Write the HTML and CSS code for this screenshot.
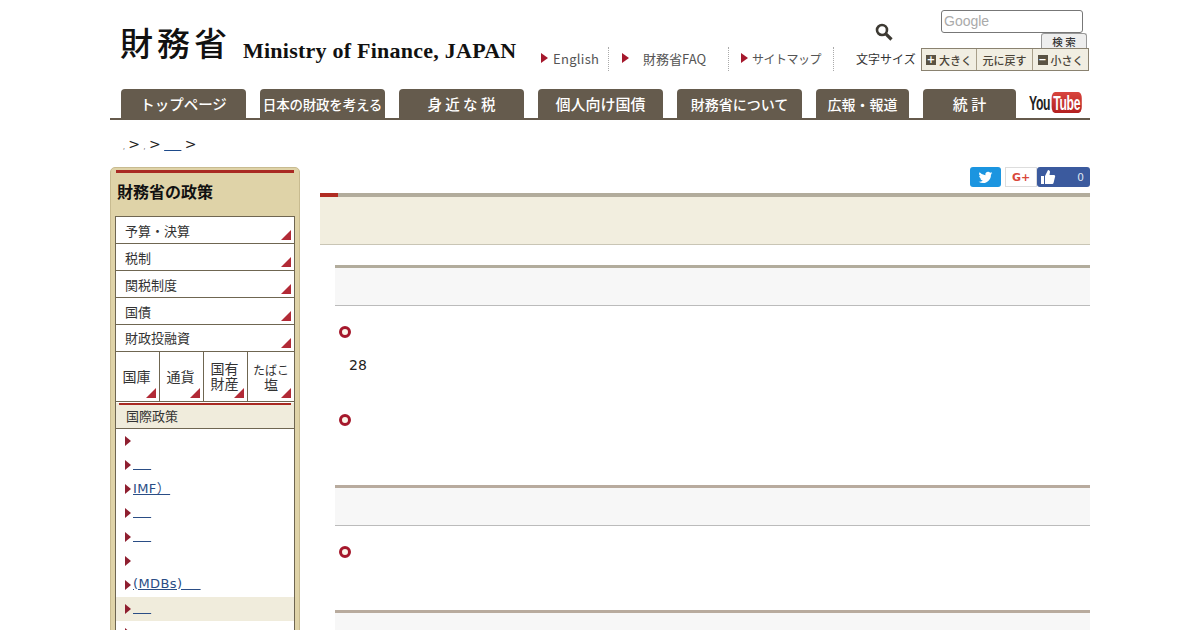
FILE: index.html
```html
<!DOCTYPE html>
<html lang="ja">
<head>
<meta charset="utf-8">
<title>財務省</title>
<link rel="stylesheet" href="styles.css">
</head>
<body>
<div class="page">
  <header class="header">
    <div class="logo"><span class="logo-ja">財務省</span><span class="logo-en">Ministry of Finance, JAPAN</span></div>
    <div class="tools">
      <div class="links">
        <a class="tl tl-en"><i class="tri"></i>English</a>
        <a class="tl tl-faq"><i class="tri"></i><span class="faq">財務省FAQ</span></a>
        <a class="tl tl-map"><i class="tri"></i><span class="map">サイトマップ</span></a>
      </div>
      <span class="fs-label">文字サイズ</span>
      <div class="search">
        <svg class="lens" viewBox="0 0 18 18" width="18" height="18"><circle cx="7" cy="7" r="5" fill="none" stroke="#3d3a33" stroke-width="2.6"/><path d="M10.8 10.8 L16.500 16.500" stroke="#3d3a33" stroke-width="3.2"/></svg>
        <div class="gbox">Google</div>
        <div class="gbtn">検 索</div>
      </div>
      <div class="fs">
        <span class="fs-b fs-1"><i class="sq">+</i>大きく</span>
        <span class="fs-b fs-2">元に戻す</span>
        <span class="fs-b fs-3"><i class="sq">−</i>小さく</span>
      </div>
    </div>
  </header>
  <nav class="nav">
    <a class="tab w125 s145">トップページ</a>
    <a class="tab w125 tight">日本の財政を考える</a>
    <a class="tab w125 s145">身 近 な 税</a>
    <a class="tab w125">個人向け国債</a>
    <a class="tab w125 s14">財務省について</a>
    <a class="tab w93 s14">広報・報道</a>
    <a class="tab w93">統 計</a>
    <div class="yt"><span class="yt-you">You</span><span class="yt-tube">Tube</span></div>
  </nav>
  <div class="crumbs"><span class="dot">,</span> &gt; <span class="dot">,</span> &gt; <a class="ul">&nbsp;&nbsp;&nbsp;&nbsp;&nbsp;</a> &gt;</div>
  <div class="cols">
    <aside class="side">
      <h2 class="side-h">財務省の政策</h2>
      <div class="side-box">
        <div class="m">予算・決算</div>
        <div class="m">税制</div>
        <div class="m">関税制度</div>
        <div class="m">国債</div>
        <div class="m m-last">財政投融資</div>
        <div class="m4">
          <div class="c">国庫</div><div class="c">通貨</div><div class="c">国有<br>財産</div><div class="c c-tb"><span class="tb">たばこ</span><br>塩</div>
        </div>
        <div class="sec">国際政策</div>
        <ul class="list">
          <li><i class="arr"></i></li>
          <li><i class="arr"></i><a>&nbsp;&nbsp;&nbsp;&nbsp;</a></li>
          <li><i class="arr"></i><a>IMF）</a></li>
          <li><i class="arr"></i><a>&nbsp;&nbsp;&nbsp;&nbsp;</a></li>
          <li><i class="arr"></i><a>&nbsp;&nbsp;&nbsp;&nbsp;</a></li>
          <li><i class="arr"></i></li>
          <li><i class="arr"></i><a>(MDBs)&nbsp;&nbsp;&nbsp;&nbsp;</a></li>
          <li class="on"><i class="arr"></i><a>&nbsp;&nbsp;&nbsp;&nbsp;</a></li>
          <li><i class="arr"></i></li>
        </ul>
      </div>
    </aside>
    <main class="main">
      <div class="share">
        <span class="sb tw"><svg viewBox="0 0 24 24" width="15" height="15"><path fill="#fff" d="M23 5a9 9 0 0 1-2.6.7A4.500 4.500 0 0 0 22.400 3.200a9 9 0 0 1-2.900 1.100 4.500 4.500 0 0 0-7.700 4.100A12.800 12.800 0 0 1 2.500 3.700a4.500 4.500 0 0 0 1.400 6 4.500 4.500 0 0 1-2-.6c0 2.200 1.500 4.100 3.600 4.500a4.500 4.500 0 0 1-2 .1 4.500 4.500 0 0 0 4.200 3.100A9 9 0 0 1 1 18.700 12.800 12.800 0 0 0 20.700 7.300 9 9 0 0 0 23 5z"/></svg></span>
        <span class="sb gp">G+</span>
        <span class="sb fb"><svg viewBox="0 0 16 16" width="16" height="16"><path fill="#fff" d="M1 7h3v8H1zM5 7l3-6c1.500 0 2 1 2 2l-.5 3H14c1 0 1.500 1 1 2l-1.500 6c-.2.700-.8 1-1.500 1H5z"/></svg><span class="fb-n">0</span></span>
      </div>
      <div class="title"></div>
      <div class="h3 h3-a"></div>
      <div class="bullet b1"></div>
      <p class="num">28</p>
      <div class="bullet b2"></div>
      <div class="h3 h3-b"></div>
      <div class="bullet b3"></div>
      <div class="h3 h3-c"></div>
    </main>
  </div>
</div>
</body>
</html>
```
FILE: styles.css
```css
* { box-sizing: border-box; }
html, body { margin: 0; height: 630px; overflow: hidden; background: #fff; }
body { font-family: "DejaVu Sans", "Noto Sans CJK JP", sans-serif; color: #222; }
.page { width: 980px; margin: 0 auto; }
a { color: #1d4a8a; }
.header { height: 89px; display: flex; position: relative; }
.logo { width: 408px; flex: none; padding: 19px 0 0 10px; display: flex; align-items: flex-end; height: 64px; }
.logo-ja { font-family: "Noto Sans CJK JP", serif; font-size: 33px; letter-spacing: 4px; font-weight: 500; line-height: 44px; color: #111; width: 124px; white-space: nowrap; }
.logo-en { font-family: "Liberation Serif", serif; font-weight: 700; font-size: 22px; letter-spacing: .24px; color: #111; line-height: 26px; white-space: nowrap; margin-left: -1px; }
.tools { position: relative; flex: 1; }
.links { position: absolute; left: 22px; top: 47px; display: flex; height: 24px; }
.tl { display: flex; align-items: center; padding-bottom: 2px; font-family: "Noto Sans CJK JP", sans-serif; font-size: 13px; color: #555; border-right: 1px dotted #aaa; white-space: nowrap; }
.tl-en { width: 69px; padding-left: 1px; letter-spacing: .3px; } .tl-faq { width: 120px; padding-left: 13px; } .tl-map { width: 105px; padding-left: 12px; }
.faq { margin-left: 9px; }
.map { font-size: 12px; letter-spacing: -.5px; margin-left: -1px; }
.tri { width: 0; height: 0; border-left: 7px solid #a5182c; border-top: 5px solid transparent; border-bottom: 5px solid transparent; margin-right: 5px; }
.fs-label { position: absolute; left: 338px; top: 49px; font: 12px "Noto Sans CJK JP", sans-serif; color: #333; line-height: 20px; white-space: nowrap; }
.fs { position: absolute; left: 403px; top: 48px; width: 168px; height: 23px; display: flex; border: 1px solid #8a8270; background: #f1eee2; }
.fs-b { font: 500 11px "Noto Sans CJK JP", sans-serif; color: #4a4438; display: flex; align-items: center; justify-content: center; white-space: nowrap; }
.fs-1 { width: 55px; border-right: 1px solid #a89f8a; } .fs-2 { width: 56px; border-right: 1px solid #a89f8a; } .fs-3 { flex: 1; }
.sq { width: 10px; height: 10px; background: #5a5344; color: #fff; font: 700 10px/10px "DejaVu Sans", sans-serif; text-align: center; margin-right: 3px; }
.search { position: absolute; inset: 0; }
.lens { position: absolute; left: 357px; top: 23px; }
.gbox { position: absolute; left: 423px; top: 10px; width: 142px; height: 23px; border: 1px solid #777; border-radius: 3px; font: 14px/21px "Liberation Sans", sans-serif; color: #aaa; padding-left: 2px; background: #fff; }
.gbtn { position: absolute; left: 523px; top: 33px; width: 46px; height: 15px; background: #eee; border: 1px solid #999; border-bottom: 0; border-radius: 3px 3px 0 0; font: 500 10.500px/16px "Noto Sans CJK JP", sans-serif; text-align: center; color: #333; }
.nav { height: 31px; border-bottom: 2px solid #655a4c; display: flex; padding-left: 11px; gap: 14px; position: relative; }
.tab { height: 31px; background: #655b4d; border-radius: 4px 4px 0 0; color: #fff; font: 500 15px/30px "Noto Sans CJK JP", sans-serif; text-align: center; white-space: nowrap; }
.w125 { width: 125px; } .w93 { width: 93px; }
.s145 { font-size: 14.500px; } .s14 { font-size: 14px; }
.tight { font-size: 13.500px; letter-spacing: -.2px; }
.yt { position: absolute; left: 919px; top: 3px; display: flex; align-items: center; font: 700 21px/21px "Liberation Sans", sans-serif; transform: scaleX(.58); transform-origin: left center; white-space: nowrap; }
.yt-you { color: #222; letter-spacing: -.5px; }
.yt-tube { background: linear-gradient(#d8453e, #b3201f); color: #fff; border-radius: 6px; padding: 0 3px; margin-left: 2px; letter-spacing: -.5px; }
.crumbs { height: 47px; padding: 14px 0 0 13px; font-size: 14px; word-spacing: -1px; line-height: 20px; color: #222; }
.dot { font-size: 6px; }
.ul { text-decoration: underline; color: #1d4a8a; }
.cols { display: flex; gap: 20px; align-items: flex-start; }
.side { width: 190px; background: #dfd3a8; border: 1px solid #c8bb90; border-radius: 5px 5px 0 0; padding: 2px 4px 0; height: 470px; flex: none; }
.side-h { border-top: 3px solid #a92a22; font: 700 16px/36px "Noto Sans CJK JP", sans-serif; height: 46px; color: #111; padding: 0 0 0 1px; margin: 0 1px; }
.side-box { background: #fff; border: 1px solid #6f6651; }
.m { height: 27px; border-bottom: 1px solid #6f6651; padding-left: 9px; font: 13px/28px "Noto Sans CJK JP", sans-serif; color: #333; position: relative; }
.m-last { line-height: 26px; }
.m::after, .c::after { content: ""; position: absolute; right: 3px; bottom: 3px; border-left: 10px solid transparent; border-bottom: 10px solid #b22a36; }
.m4 { display: flex; height: 50px; border-bottom: 1px solid #6f6651; }
.c { width: 44px; border-right: 1px solid #6f6651; position: relative; padding: 0 2px 1px 0; font: 14px/15px "Noto Sans CJK JP", sans-serif; color: #333; display: flex; align-items: center; justify-content: center; text-align: center; white-space: nowrap; }
.c-tb { display: block; padding: 10px 0 0; }
.c:last-child { border-right: 0; flex: 1; }
.tb { font-size: 12px; }
.sec { margin-top: 1px; height: 26px; background: #f0ecdc; border-bottom: 1px solid #6f6651; font: 13px/25px "Noto Sans CJK JP", sans-serif; color: #333; padding-left: 10px; position: relative; }
.sec::before { content: ""; position: absolute; left: 3px; right: 3px; top: 0; height: 2px; background: #a92a22; }
.list { list-style: none; margin: 0; padding: 0; }
.list li { height: 24px; display: flex; align-items: center; padding-left: 9px; padding-bottom: 2px; font-size: 13px; letter-spacing: .4px; }
.list li.on { background: #f0ecdc; }
.arr { width: 0; height: 0; border-left: 6px solid #8f1f30; border-top: 5px solid transparent; border-bottom: 5px solid transparent; margin-right: 2px; flex: none; margin-top: 1px; }
.list a { text-decoration: underline; color: #2a4d85; margin-bottom: 2px; }
.main { flex: 1; position: relative; height: 463px; }
.share { position: absolute; right: 0; top: 0; display: flex; height: 20px; }
.sb { display: flex; align-items: center; justify-content: center; height: 20px; }
.tw { width: 31px; background: #1b95e0; border-radius: 3px; margin-right: 4px; }
.gp { width: 32px; background: #fff; border: 1px solid #ddd; color: #d9473a; font: 700 11px "DejaVu Sans", sans-serif; }
.fb { width: 53px; background: #3b5a9e; border-radius: 3px; justify-content: flex-start; padding-left: 3px; position: relative; }
.fb-n { position: absolute; right: 6px; top: 3px; font: 10.500px/14px "DejaVu Sans", sans-serif; color: #dfe5f2; }
.title { position: absolute; left: 0; right: 0; top: 26px; height: 52px; background: #f2eedf; border-top: 4px solid #b2ac9c; border-bottom: 1px solid #c9c5b5; }
.title::before { content: ""; position: absolute; left: 0; top: -4px; width: 18px; height: 4px; background: #b02c22; }
.h3 { position: absolute; left: 15px; right: 0; height: 41px; background: #f7f7f7; border-top: 3px solid #b2ac9c; border-bottom: 1px solid #bbb; }
.h3-a { top: 98px; }
.h3-b { top: 318px; border-top-color: #b8ab9e; }
.h3-c { top: 443px; border-top-color: #b8ab9e; border-bottom: 0; }
.bullet { position: absolute; left: 19px; width: 12px; height: 12px; border: 3.500px solid #a5182c; border-radius: 50%; background: #fbf6ea; }
.b1 { top: 159px; } .b2 { top: 247px; } .b3 { top: 379px; }
.num { position: absolute; left: 29px; top: 188px; margin: 0; font-size: 14px; line-height: 20px; color: #222; }
```
